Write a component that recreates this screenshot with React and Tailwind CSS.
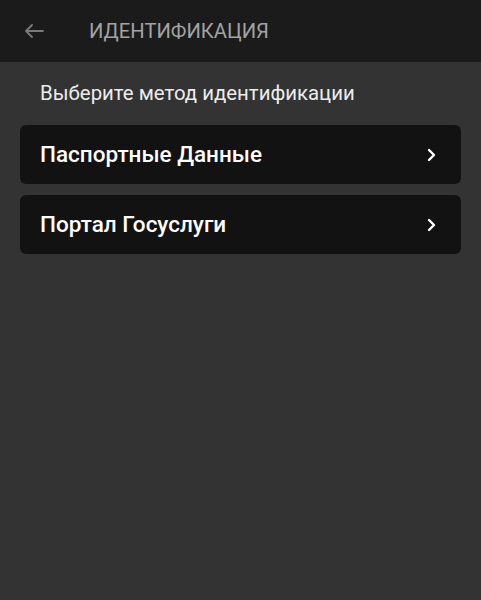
import React from "react";

function Chevron() {
  return (
    <svg viewBox="0 0 10 14" className="w-[10px] h-[14px]" fill="none">
      <path d="M2 2l5 5-5 5" stroke="#ffffff" strokeWidth="2.4" strokeLinecap="round" strokeLinejoin="round" />
    </svg>
  );
}

function MethodRow({ title }) {
  return (
    <button className="w-full h-[59px] bg-[#121212] rounded-md flex items-center justify-between pl-5 pr-[24px] text-left">
      <span className="text-[22.5px] font-medium text-white">{title}</span>
      <Chevron />
    </button>
  );
}

export default function App() {
  return (
    <div
      className="w-[481px] h-[600px] bg-[#333333] flex flex-col"
      style={{ fontFamily: "Roboto, 'Noto Sans', sans-serif" }}
    >
      <div className="h-[62px] bg-[#1b1b1b] flex items-center shrink-0">
        <div className="w-[89px] flex items-center pl-6">
          <svg viewBox="0 0 20 14" className="w-[20px] h-[14px]" fill="none">
            <path d="M19 7H2M8 1L2 7l6 6" stroke="#7a7a7a" strokeWidth="1.8" strokeLinecap="round" strokeLinejoin="round" />
          </svg>
        </div>
        <span className="text-[20.2px] text-[#a3a3a3]">ИДЕНТИФИКАЦИЯ</span>
      </div>

      <div className="px-5 pt-[17px]">
        <p className="pl-5 text-[20.4px] text-[#ececec] leading-[28px]">Выберите метод идентификации</p>
        <div className="mt-[18px] flex flex-col gap-[11px]">
          <MethodRow title="Паспортные Данные" />
          <MethodRow title="Портал Госуслуги" />
        </div>
      </div>
    </div>
  );
}
